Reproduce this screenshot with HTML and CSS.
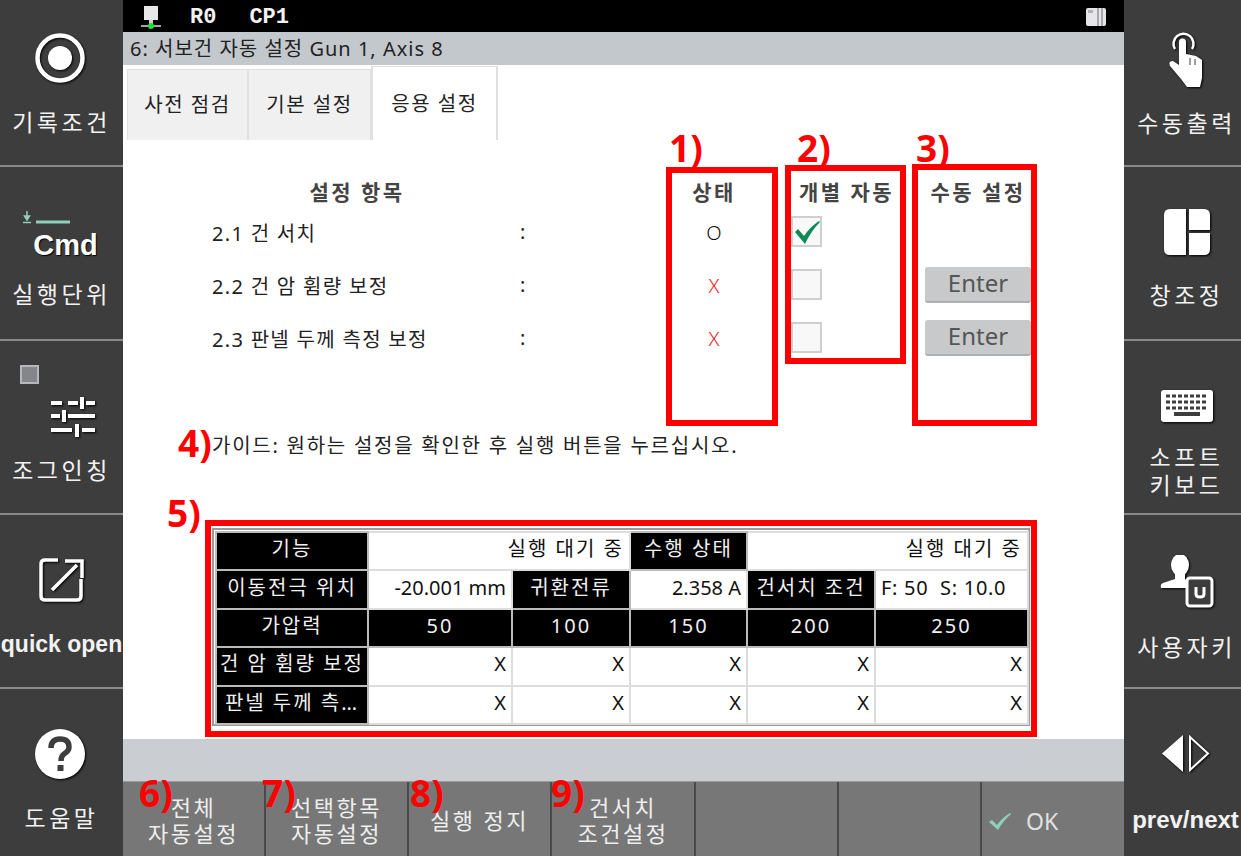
FILE: index.html
```html
<!DOCTYPE html>
<html lang="ko">
<head>
<meta charset="UTF-8">
<meta name="viewport" content="width=device-width, initial-scale=1.0">
<title>서보건 자동 설정</title>
<link rel="stylesheet" href="styles.css">
</head>
<body>
<div class="screen">

    <!-- Left side keys -->
    <div class="side side-left">
        <div class="key key-record">
            <svg class="icon" width="52" height="52" viewBox="0 0 52 52"><circle cx="26" cy="26" r="22.5" fill="none" stroke="#fff" stroke-width="4.5"/><circle cx="26" cy="26" r="12" fill="#fff"/></svg>
            <div class="key-label">기록조건</div>
        </div>
        <div class="key key-cmd">
            <svg class="step-mark" width="48" height="14" viewBox="0 0 48 14"><path d="M4 1V8M1.500 6L4 10L6.500 6ZM0 12.500H8" fill="#8fd0bb" stroke="#8fd0bb" stroke-width="1.500"/><path d="M13 12H47" stroke="#8fd0bb" stroke-width="3"/></svg>
            <div class="cmd-text">Cmd</div>
            <div class="key-label">실행단위</div>
        </div>
        <div class="key key-jog">
            <div class="jog-lamp"></div>
            <svg class="icon" width="45" height="40" viewBox="0 0 45 40"><path d="M1 6H12M18 6H28M36 6H45M1 19H10M18 19H45M1 33H22M32 33H45" stroke="#fff" stroke-width="4"/><path d="M32 0V12M14 13V25M27 27V40" stroke="#fff" stroke-width="4"/></svg>
            <div class="key-label">조그인칭</div>
        </div>
        <div class="key key-quick">
            <svg class="icon" width="46" height="46" viewBox="0 0 46 46"><path d="M19 3H6Q2 3 2 7V39Q2 43 6 43H38Q42 43 42 39V22" fill="none" stroke="#fff" stroke-width="3.500"/><path d="M13 33L38 8M26 4H43V21" fill="none" stroke="#fff" stroke-width="3.500"/></svg>
            <div class="key-label key-latin">quick open</div>
        </div>
        <div class="key key-help">
            <svg class="icon" width="52" height="52" viewBox="0 0 52 52"><circle cx="26" cy="26" r="25" fill="#fff"/><path d="M17 20Q17 11 26 11Q35 11 35 19Q35 23 30 26Q27 28 27 33" fill="none" stroke="#3d3d3d" stroke-width="5.500"/><rect x="23.500" y="37" width="6" height="6" fill="#3d3d3d"/></svg>
            <div class="key-label">도움말</div>
        </div>
    </div>

    <div class="main">
        <div class="status-bar">
            <svg class="net-icon" width="20" height="24" viewBox="0 0 20 24"><rect x="3" y="1" width="14" height="14" fill="#e8e8e8"/><rect x="8" y="15" width="4" height="4" fill="#ccc"/><path d="M0 21H20" stroke="#ddd" stroke-width="1.500"/><circle cx="10" cy="21" r="3" fill="#22dd33"/></svg>
            <span class="status-robot">R0</span>
            <span class="status-cp">CP1</span>
            <svg class="book-icon" width="22" height="20" viewBox="0 0 22 20"><rect x="1" y="1" width="20" height="18" rx="2" fill="#e6e6ea"/><rect x="12" y="1" width="2" height="18" fill="#a8a8ac"/><rect x="16" y="1" width="2" height="18" fill="#a8a8ac"/><rect x="3" y="3" width="5" height="3" fill="#b0b0b4"/></svg>
        </div>
        <div class="title-bar">6: 서보건 자동 설정 Gun 1, Axis 8</div>

        <div class="tabs">
            <div class="tab">사전 점검</div>
            <div class="tab tab-second">기본 설정</div>
            <div class="tab tab-active">응용 설정</div>
        </div>

        <div class="content">
            <div class="settings">
                <div class="head head-name">설정 항목</div>
                <div></div>
                <div class="head">상태</div>
                <div class="head">개별 자동</div>
                <div class="head">수동 설정</div>

                <div class="item">2.1 건 서치</div>
                <div class="colon">:</div>
                <div class="state">O</div>
                <div class="check-cell">
                    <div class="check">
                        <svg width="27" height="26" viewBox="0 0 27 26"><path d="M2 13L5 10L11 17Q17 8 26 2L27 3Q18 12 12 25Z" fill="#0b8a55"/></svg>
                    </div>
                </div>
                <div></div>

                <div class="item">2.2 건 암 휨량 보정</div>
                <div class="colon">:</div>
                <div class="state state-bad">X</div>
                <div class="check-cell"><div class="check"></div></div>
                <div><div class="enter">Enter</div></div>

                <div class="item">2.3 판넬 두께 측정 보정</div>
                <div class="colon">:</div>
                <div class="state state-bad">X</div>
                <div class="check-cell"><div class="check"></div></div>
                <div><div class="enter">Enter</div></div>
            </div>

            <div class="guide">가이드: 원하는 설정을 확인한 후 실행 버튼을 누르십시오.</div>

            <div class="result-frame">
                <table class="result">
                    <colgroup>
                        <col class="c1"><col class="c2"><col class="c3"><col class="c4"><col class="c5"><col class="c6">
                    </colgroup>
                    <tr>
                        <th>기능</th>
                        <td class="wide" colspan="2">실행 대기 중</td>
                        <th>수행 상태</th>
                        <td class="wide" colspan="2">실행 대기 중</td>
                    </tr>
                    <tr>
                        <th>이동전극 위치</th>
                        <td>-20.001 mm</td>
                        <th>귀환전류</th>
                        <td>2.358 A</td>
                        <th>건서치 조건</th>
                        <td class="left">F: 50&nbsp; S: 10.0</td>
                    </tr>
                    <tr>
                        <th>가압력</th>
                        <th>50</th>
                        <th>100</th>
                        <th>150</th>
                        <th>200</th>
                        <th>250</th>
                    </tr>
                    <tr>
                        <th>건 암 휨량 보정</th>
                        <td>X</td><td>X</td><td>X</td><td>X</td><td>X</td>
                    </tr>
                    <tr>
                        <th>판넬 두께 측…</th>
                        <td>X</td><td>X</td><td>X</td><td>X</td><td>X</td>
                    </tr>
                </table>
            </div>
        </div>

        <div class="band"></div>
        <div class="toolbar">
            <div class="tool">전체<br>자동설정</div>
            <div class="tool">선택항목<br>자동설정</div>
            <div class="tool tool-single">실행 정지</div>
            <div class="tool tool-fourth">건서치<br>조건설정</div>
            <div class="tool"></div>
            <div class="tool"></div>
            <div class="tool tool-ok">
                <svg width="24" height="20" viewBox="0 0 24 20"><path d="M1 11L4 9L9 14Q14 7 22 2L23 3Q15 10 10 19Z" fill="#8fd0bb"/></svg>
                <span>OK</span>
            </div>
        </div>

        <!-- Red notes drawn on top of the screen -->
        <div class="note-box box-1"></div>
        <div class="note-box box-2"></div>
        <div class="note-box box-3"></div>
        <div class="note-box box-5"></div>
        <span class="note note-1">1)</span>
        <span class="note note-2">2)</span>
        <span class="note note-3">3)</span>
        <span class="note note-4">4)</span>
        <span class="note note-5">5)</span>
        <span class="note note-6">6)</span>
        <span class="note note-7">7)</span>
        <span class="note note-8">8)</span>
        <span class="note note-9">9)</span>
    </div>

    <!-- Right side keys -->
    <div class="side side-right">
        <div class="key key-hand">
            <svg class="icon" width="36" height="56" viewBox="0 0 36 56"><path d="M6 17A10 10 0 1 1 23 17" fill="none" stroke="#fff" stroke-width="2.500"/><path d="M10 10A3.500 3.500 0 0 1 17 10V22L22 23L27 24L33 28V46L31 55H18L12 47L1 34Q-1 29 4 29L10 33Z" fill="#fff"/><path d="M21 26V33M26 27V33" stroke="#3d3d3d" stroke-width="1"/></svg>
            <div class="key-label">수동출력</div>
        </div>
        <div class="key key-panel">
            <svg class="icon" width="46" height="46" viewBox="0 0 46 46"><path d="M22 0H6Q0 0 0 6V40Q0 46 6 46H22ZM25 0H40Q46 0 46 6V21H25ZM25 24H46V40Q46 46 40 46H25Z" fill="#fff"/></svg>
            <div class="key-label">창조정</div>
        </div>
        <div class="key key-soft">
            <svg class="icon" width="52" height="32" viewBox="0 0 52 32"><rect width="52" height="32" rx="3" fill="#fff"/><path d="M5 6H47M5 12H47M5 18H47" stroke="#3d3d3d" stroke-width="3" stroke-dasharray="4 2"/><rect x="13" y="22" width="26" height="4" fill="#3d3d3d"/></svg>
            <div class="key-label">소프트<br>키보드</div>
        </div>
        <div class="key key-user">
            <svg class="icon" width="54" height="54" viewBox="0 0 54 54"><ellipse cx="20" cy="10" rx="9" ry="11" fill="#fff"/><path d="M15 17H25V24L27 26V33H1Q0 29 3 28L15 24Z" fill="#fff"/><rect x="27" y="23" width="25" height="28" rx="3" fill="#3d3d3d" stroke="#fff" stroke-width="3"/><path d="M36 32V39Q36 42 40 42Q44 42 44 39V32" fill="none" stroke="#fff" stroke-width="3"/></svg>
            <div class="key-label">사용자키</div>
        </div>
        <div class="key key-prev">
            <svg class="icon" width="50" height="38" viewBox="0 0 50 38"><path d="M22 0V37L1 18.500Z" fill="#fff"/><path d="M29 2V35L47 18.500Z" fill="none" stroke="#fff" stroke-width="2"/></svg>
            <div class="key-label key-latin">prev/next</div>
        </div>
    </div>
</div>
</body>
</html>
```

FILE: styles.css
```css
* {
    box-sizing: border-box;
}

html,
body {
    margin: 0;
    padding: 0;
    background-color: #fff;
}

body {
    font-family: "Noto Sans", "Noto Sans CJK KR", sans-serif;
    color: #222;
}

.screen {
    display: flex;
    width: 1241px;
    height: 856px;
    overflow: hidden;
}

/* side keys */
.side {
    display: flex;
    flex: none;
    flex-direction: column;
    background-color: #3d3d3d;
    color: #fff;
}

.side-left {
    width: 123px;
}

.side-right {
    width: 117px;
}

.key {
    position: relative;
    display: flex;
    flex-direction: column;
    align-items: center;
    height: 174px;
    border-bottom: 2px solid #8a8a8a;
}

.key:first-child {
    height: 167px;
}

.key:last-child {
    flex: 1;
    border-bottom: 0;
}

.side-right .key {
    padding-left: 8px;
}

.icon {
    flex: none;
    filter: drop-shadow(1px 1px 1px #000);
}

.key-label {
    font-size: 23px;
    line-height: 28px;
    letter-spacing: 3.5px;
    text-align: center;
    white-space: nowrap;
    color: #f2f2f2;
}

.key-latin {
    font-family: "Liberation Sans", sans-serif;
    font-weight: bold;
    letter-spacing: 0;
}

.key-record { padding-top: 32px; }
.key-record .icon { margin-right: 4px; }
.key-record .key-label { margin-top: 24px; }

.key-cmd { padding-top: 43px; }
.key-cmd .key-label { margin-top: 18px; }

.step-mark {
    align-self: flex-start;
    margin-left: 23px;
}

.cmd-text {
    font-family: "Liberation Sans", sans-serif;
    font-weight: bold;
    font-size: 29px;
    line-height: 34px;
    margin-top: 4px;
    margin-left: 8px;
    text-shadow: 1px 1px 1px #000;
}

.key-jog { padding-top: 56px; }
.key-jog .icon { margin-left: 22px; }
.key-jog .key-label { margin-top: 19px; }

.jog-lamp {
    position: absolute;
    left: 20px;
    top: 24px;
    width: 19px;
    height: 19px;
    background-color: #85858a;
    border: 2px solid #b4b8be;
}

.key-quick { padding-top: 42px; }
.key-quick .key-label { margin-top: 27px; }

.key-help { padding-top: 39px; }
.key-help .icon { margin-right: 4px; }
.key-help .key-label { margin-top: 24px; }

.key-hand { padding-top: 32px; }
.key-hand .key-label { margin-top: 21px; }

.key-panel { padding-top: 42px; }
.key-panel .key-label { margin-top: 26px; }

.key-soft { padding-top: 49px; }
.key-soft .key-label { margin-top: 21px; }

.key-user { padding-top: 40px; }
.key-user .key-label { margin-top: 24px; }

.key-prev { padding-top: 46px; }
.key-prev .key-label { margin-top: 33px; font-size: 24px; }
.side-right .key-prev { padding-left: 6px; }

/* middle */
.main {
    position: relative;
    display: flex;
    flex-direction: column;
    flex: 1;
    min-width: 0;
    background-color: #fff;
}

.status-bar {
    display: flex;
    align-items: center;
    height: 32px;
    padding: 2px 17px 0 18px;
    background-color: #000;
    color: #f2f2f2;
    font-family: "Liberation Mono", monospace;
    font-weight: bold;
    font-size: 22px;
}

.status-robot {
    margin-left: 29px;
}

.status-cp {
    margin-left: 33px;
}

.book-icon {
    margin-left: auto;
}

.title-bar {
    height: 33px;
    padding-left: 7px;
    background-color: #c3c8cc;
    font-size: 20px;
    line-height: 33px;
    letter-spacing: 1px;
    white-space: nowrap;
    color: #222;
}

.tabs {
    display: flex;
    align-items: flex-end;
    height: 75px;
    padding-left: 4px;
}

.tab {
    width: 121px;
    height: 71px;
    border: 1px solid #e0e0e0;
    border-bottom: 0;
    background-color: #f0f0f0;
    font-size: 20px;
    line-height: 70px;
    letter-spacing: 1.5px;
    text-align: center;
}

.tab-second {
    width: 123px;
}

.tab-active {
    width: 127px;
    height: 74px;
    background-color: #fff;
    border-width: 1px 2px 0 2px;
    line-height: 74px;
}

.content {
    flex: 1;
    padding-top: 37px;
}

.settings {
    display: grid;
    grid-template-columns: 308px 140px 108px 157px 106px;
    grid-template-rows: 28px 53px 53px 53px;
    margin-left: 89px;
    align-items: center;
}

.head {
    margin-top: 2px;
    font-size: 21px;
    font-weight: bold;
    line-height: 30px;
    letter-spacing: 2.5px;
    text-align: center;
    white-space: nowrap;
    color: #444;
}

.head-name {
    padding-right: 18px;
}

.item {
    padding-top: 1px;
    font-size: 20px;
    letter-spacing: 1.3px;
    white-space: nowrap;
    color: #222;
}

.colon {
    font-size: 20px;
}

.state {
    padding-top: 1px;
    text-align: center;
    font-size: 20px;
    font-weight: 300;
    color: #111;
}

.state-bad {
    color: #f02020;
}

.check-cell {
    padding-left: 23px;
}

.check {
    width: 31px;
    height: 31px;
    border: 2px solid #cfcfcf;
    background-color: #f8f8f8;
}

.check svg {
    display: block;
    margin-top: 1px;
}

.enter {
    height: 36px;
    background-color: #c8c9cb;
    border-bottom: 2px solid #aeafb2;
    border-radius: 3px;
    color: #555;
    font-size: 24px;
    line-height: 32px;
    text-align: center;
}

.guide {
    margin: 67px 0 0 89px;
    font-size: 20px;
    line-height: 30px;
    letter-spacing: 1.75px;
    white-space: nowrap;
}

.result-frame {
    width: 818px;
    height: 198px;
    margin: 67px 0 0 89px;
    padding: 1px;
    border: 2px solid #9a9a9a;
}

.result {
    width: 100%;
    border-collapse: collapse;
    table-layout: fixed;
    font-size: 20px;
}

.c1 { width: 152px; }
.c2 { width: 144px; }
.c3 { width: 118px; }
.c4 { width: 117px; }
.c5 { width: 128px; }
.c6 { width: 153px; }

.result th,
.result td {
    height: 38.4px;
    padding: 0 5px 4px;
    border: 2px solid #ddd;
    font-weight: normal;
    line-height: 30px;
    white-space: nowrap;
}

.result th {
    padding: 0 0 4px;
    background-color: #000;
    color: #f0f0f0;
    border-color: #bbb;
    letter-spacing: 2px;
}

.result td {
    text-align: right;
    color: #111;
}

.result td.wide {
    letter-spacing: 2px;
}

.result td.left {
    text-align: left;
    letter-spacing: 0.7px;
}

.band {
    height: 42px;
    background-color: #cacdd2;
}

.toolbar {
    display: flex;
    height: 75px;
    background-color: #777;
    border-top: 1px solid #9a9a9a;
}

.tool {
    display: flex;
    align-items: center;
    justify-content: center;
    width: 143px;
    padding-top: 2px;
    border-right: 2px solid #4a4a4a;
    color: #eee;
    font-size: 22px;
    line-height: 26px;
    letter-spacing: 2.5px;
    text-align: center;
}

.tool-fourth {
    width: 144px;
}

.tool-ok {
    flex: 1;
    justify-content: flex-start;
    gap: 14px;
    border-right: 0;
    padding: 4px 0 0 6px;
    font-size: 23px;
    letter-spacing: 0;
    color: #e0e0e0;
}

/* red notes */
.note-box {
    position: absolute;
    border: 6px solid #f00;
}

.box-1 { left: 543px; top: 167px; width: 112px; height: 259px; }
.box-2 { left: 662px; top: 165px; width: 121px; height: 199px; }
.box-3 { left: 789px; top: 164px; width: 125px; height: 262px; }
.box-5 { left: 82px; top: 520px; width: 832px; height: 217px; }

.note {
    position: absolute;
    font-family: "Open Sans", sans-serif;
    font-weight: bold;
    font-size: 37px;
    line-height: 36px;
    color: #f00;
    white-space: nowrap;
}

.note-1 { left: 546px; top: 130px; }
.note-2 { left: 674px; top: 130px; }
.note-3 { left: 793px; top: 130px; }
.note-4 { left: 55px; top: 425px; }
.note-5 { left: 44px; top: 495px; }
.note-6 { left: 16px; top: 775px; }
.note-7 { left: 139px; top: 775px; }
.note-8 { left: 287px; top: 775px; }
.note-9 { left: 428px; top: 775px; }
```
